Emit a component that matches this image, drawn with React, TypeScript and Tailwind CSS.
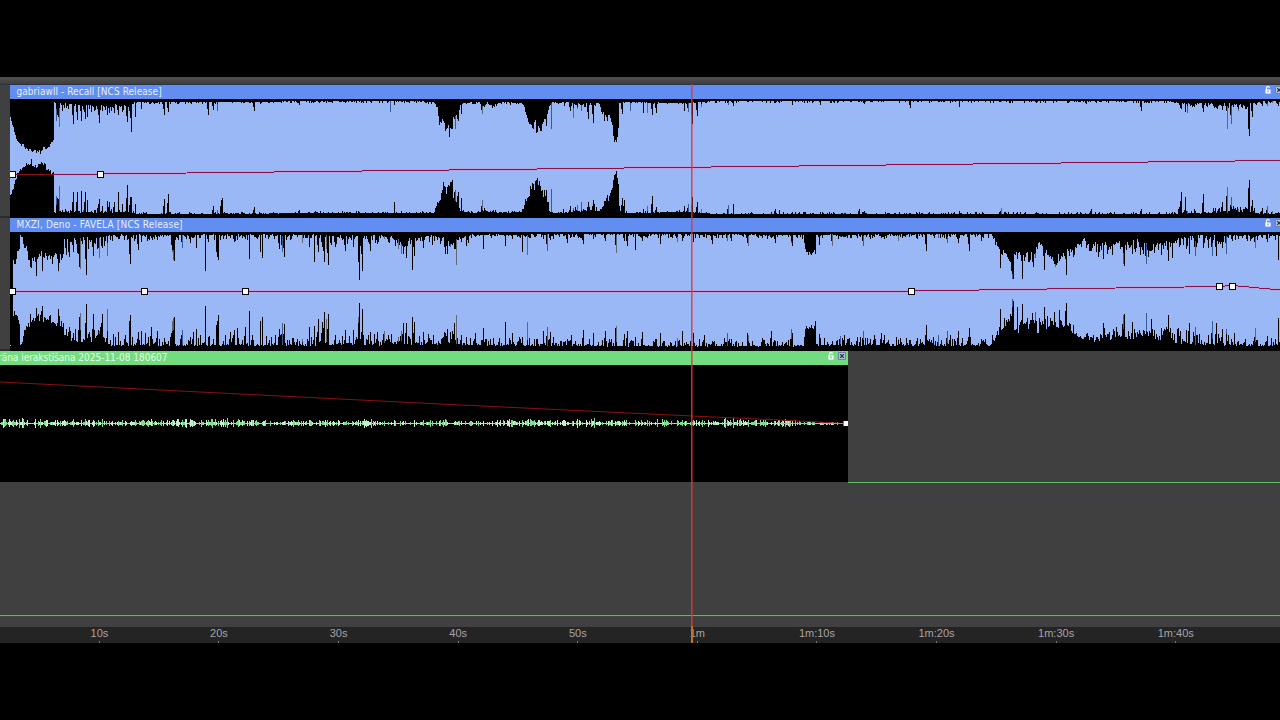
type Row = [number, number, number];

const WIDTH = 1280;
const WAVE_H = 113;

// [x, depth from the top edge, height from the bottom edge]
const RECALL_SHAPE: Row[] = [
  [10, 17, 19], [13, 25, 24], [15, 34, 34], [17, 40, 39], [21, 43, 44], [25, 46, 47], [31, 50, 51],
  [34, 49, 47], [37, 50, 47], [40, 50, 51], [44, 46, 49], [47, 47, 44], [50, 42, 42], [53, 38, 40],
  [54, 1, 1], [57, 4, 2], [72, 4, 2], [85, 5, 2], [98, 6, 2], [128, 5, 2], [137, 1, 0], [420, 0, 1],
  [434, 1, 1], [437, 8, 10], [439, 21, 12], [442, 18, 22], [444, 27, 28], [447, 30, 27], [449, 31, 30],
  [452, 31, 30], [453, 20, 18], [456, 12, 10], [461, 2, 2], [478, 1, 1], [482, 5, 4], [496, 3, 2],
  [502, 1, 1], [521, 2, 2], [524, 6, 6], [526, 18, 14], [528, 20, 18], [531, 26, 29], [535, 25, 30],
  [538, 31, 32], [541, 30, 30], [543, 20, 22], [546, 17, 15], [549, 5, 3], [552, 1, 1], [568, 2, 2],
  [580, 4, 4], [600, 3, 3], [602, 12, 6], [605, 15, 10], [607, 16, 15], [610, 19, 20], [612, 26, 26],
  [614, 38, 38], [616, 40, 42], [618, 28, 30], [619, 2, 6], [622, 1, 1], [640, 1, 1], [680, 2, 2],
  [702, 1, 1], [712, 0, 0], [1170, 0, 0], [1180, 3, 1], [1200, 3, 1], [1225, 4, 3], [1240, 4, 3],
  [1254, 3, 2], [1260, 0, 0], [1280, 0, 0],
];

const RECALL_SPIKES: Row[] = [
  [56, 20, 18], [57, 14, 16], [59, 26, 28], [62, 10, 4], [64, 7, 2], [68, 8, 3], [73, 23, 22], [77, 19, 22],
  [81, 20, 23], [83, 9, 4], [85, 18, 22], [87, 16, 14], [91, 8, 3], [95, 9, 4], [98, 14, 10], [99, 22, 15],
  [102, 10, 8], [107, 14, 13], [109, 12, 12], [111, 10, 5], [114, 12, 12], [118, 14, 22], [122, 9, 10],
  [126, 15, 12], [127, 21, 29], [130, 17, 17], [131, 31, 17],
  [135, 16, 10], [141, 8, 1], [164, 14, 15], [168, 11, 20], [208, 14, 0], [213, 9, 8], [217, 10, 4],
  [221, 0, 14], [222, 0, 16], [254, 10, 7], [299, 4, 4], [390, 11, 0], [394, 4, 12], [455, 28, 24],
  [457, 18, 18], [458, 20, 22], [461, 13, 16], [481, 9, 8], [482, 13, 14], [551, 28, 25], [546, 25, 24],
  [570, 10, 8], [573, 17, 6], [577, 8, 9], [581, 10, 12], [588, 18, 12], [593, 22, 14], [622, 13, 16],
  [624, 2, 14], [630, 10, 0], [643, 12, 5], [647, 12, 8], [652, 14, 18], [656, 12, 7], [684, 10, 8],
  [688, 11, 10], [692, 23, 17], [697, 15, 12], [701, 6, 5], [728, 4, 9], [733, 5, 10], [775, 2, 5],
  [779, 2, 4], [792, 4, 0], [820, 4, 2], [859, 1, 5], [864, 3, 3], [910, 7, 1], [959, 6, 3],
  [1001, 1, 6], [1091, 0, 5], [1086, 3, 0], [1141, 10, 5], [1180, 7, 13], [1181, 8, 22], [1185, 11, 17],
  [1187, 12, 3], [1203, 11, 20], [1215, 6, 6], [1222, 9, 12], [1227, 28, 27], [1226, 10, 18],
  [1231, 23, 17], [1238, 10, 5], [1248, 28, 26], [1249, 35, 34], [1252, 16, 14], [1262, 5, 6],
  [1267, 5, 8], [1272, 2, 3], [1278, 5, 2],
];

const FAVELA_SHAPE: Row[] = [
  [10, 113, 0], [12, 113, 0], [13, 27, 32], [15, 30, 31], [17, 17, 29], [19, 16, 20], [20, 0, 0], [22, 3, 5],
  [24, 8, 14], [26, 14, 22], [28, 28, 24], [32, 27, 30], [36, 27, 32], [40, 20, 30], [44, 20, 28],
  [50, 24, 26], [54, 20, 22], [58, 26, 24], [62, 22, 22], [64, 4, 10], [67, 8, 14], [75, 8, 10],
  [82, 5, 8], [90, 6, 10], [100, 5, 8], [107, 2, 4], [120, 1, 2], [310, 1, 2], [340, 3, 4], [360, 3, 5],
  [380, 2, 3], [395, 5, 5], [403, 12, 6], [415, 6, 5], [430, 1, 3], [440, 5, 5], [446, 12, 10],
  [456, 6, 6], [470, 1, 2], [640, 0, 1], [803, 1, 1], [805, 16, 18], [808, 18, 20], [810, 21, 20],
  [813, 17, 20], [815, 20, 22], [816, 1, 2], [992, 0, 2], [995, 6, 8], [997, 12, 12], [999, 18, 18],
  [1001, 22, 18], [1003, 18, 22], [1008, 24, 28], [1011, 33, 32], [1013, 43, 44], [1014, 20, 14],
  [1018, 16, 18], [1022, 20, 20], [1026, 22, 24], [1030, 23, 26], [1034, 25, 30], [1037, 8, 20],
  [1040, 8, 20], [1044, 20, 18], [1048, 20, 22], [1053, 25, 24], [1056, 28, 22], [1060, 22, 24],
  [1066, 21, 28], [1072, 18, 20], [1078, 11, 12], [1084, 6, 10], [1090, 16, 10], [1096, 13, 9],
  [1104, 16, 14], [1110, 14, 12], [1115, 12, 14], [1120, 11, 11], [1126, 15, 16], [1130, 11, 11],
  [1138, 10, 11], [1144, 17, 18], [1150, 18, 16], [1156, 13, 12], [1162, 10, 10], [1170, 9, 7],
  [1180, 6, 7], [1190, 4, 5], [1210, 3, 4], [1220, 1, 3], [1250, 2, 2], [1270, 1, 1], [1280, 3, 3],
];

const FAVELA_SPIKES: Row[] = [
  [36, 42, 39], [42, 37, 41], [47, 26, 28], [52, 30, 18], [58, 37, 38], [66, 21, 18], [69, 23, 20],
  [73, 18, 14], [79, 33, 30], [80, 35, 34], [86, 41, 43], [90, 8, 10], [93, 22, 33], [99, 24, 16],
  [102, 14, 33], [107, 22, 38], [118, 5, 15], [129, 20, 26], [130, 30, 32], [138, 16, 15], [141, 8, 16],
  [145, 3, 14], [151, 4, 20], [157, 5, 16], [172, 18, 26], [173, 26, 29], [174, 27, 30], [182, 14, 17],
  [190, 9, 10], [193, 4, 15], [196, 14, 18], [205, 37, 41], [208, 8, 10], [216, 18, 22], [217, 23, 26],
  [218, 26, 32], [230, 4, 15], [234, 8, 17], [237, 6, 19], [245, 5, 20], [249, 25, 36], [260, 18, 26],
  [262, 24, 30], [279, 15, 18], [282, 18, 24], [284, 23, 23], [302, 9, 8], [309, 13, 20], [314, 28, 21],
  [318, 18, 28], [322, 13, 25], [324, 28, 35], [326, 15, 28], [328, 31, 33], [335, 13, 12], [345, 17, 17],
  [353, 13, 17], [358, 14, 30], [359, 46, 44], [361, 20, 15], [362, 37, 38], [368, 8, 12], [370, 17, 15],
  [377, 10, 15], [384, 5, 16], [388, 8, 12], [398, 15, 10], [401, 20, 16], [403, 20, 24], [406, 24, 24],
  [412, 36, 30], [414, 22, 25], [423, 14, 15], [445, 20, 14], [447, 20, 18], [450, 13, 10],
  [454, 15, 24], [456, 31, 32], [461, 8, 12], [475, 3, 14], [483, 15, 19], [505, 12, 25], [512, 5, 14],
  [519, 3, 10], [522, 18, 10], [527, 21, 25], [543, 5, 16], [547, 17, 20], [550, 6, 15], [553, 5, 10],
  [567, 9, 4], [571, 3, 12], [583, 10, 17], [593, 5, 14], [605, 7, 16], [615, 10, 19], [616, 19, 21],
  [624, 7, 13], [627, 12, 16], [635, 16, 10], [642, 7, 15], [660, 10, 14], [677, 8, 9], [682, 7, 16],
  [693, 8, 14], [704, 3, 12], [712, 10, 6], [727, 7, 14], [731, 7, 8], [747, 9, 14], [748, 12, 12],
  [762, 3, 9], [771, 4, 16], [775, 9, 4], [791, 9, 18], [792, 12, 14], [815, 20, 26], [819, 11, 13],
  [832, 12, 6], [840, 3, 11], [844, 3, 12], [857, 4, 10], [863, 12, 16], [870, 5, 8], [874, 3, 12],
  [881, 4, 14], [884, 5, 12], [898, 7, 8], [917, 5, 9], [926, 17, 22], [938, 4, 12], [947, 9, 16],
  [950, 3, 12], [958, 9, 16], [969, 17, 19], [981, 7, 8], [992, 2, 12], [1000, 34, 38], [1012, 45, 48],
  [1017, 25, 40], [1022, 45, 43], [1035, 24, 35], [1044, 36, 40], [1055, 33, 25], [1056, 31, 20],
  [1066, 41, 44], [1123, 30, 32], [1124, 32, 33], [1132, 18, 25], [1146, 30, 34], [1168, 27, 32],
  [1172, 24, 14], [1189, 20, 24], [1195, 22, 20], [1212, 22, 26], [1216, 22, 24], [1222, 14, 18],
  [1226, 20, 18], [1231, 5, 8], [1255, 14, 19], [1267, 8, 11], [1278, 26, 29],
];

// stretches where single columns stand well out of the body:
// [from, to, top, bottom, smallest share of the body that a column keeps]
const RECALL_ROUGH = [
  [54, 136, 7, 3, 0.35], [437, 462, 6, 7, 0.72], [478, 500, 4, 4, 0.3], [524, 550, 5, 7, 0.75],
  [562, 600, 5, 7, 0.35], [600, 613, 7, 7, 0.75], [1176, 1256, 6, 6, 0.35],
];
const FAVELA_ROUGH = [
  [22, 64, 8, 9, 0.78], [64, 110, 16, 18, 0.35], [110, 330, 6, 12, 0.3], [330, 470, 10, 12, 0.35],
  [470, 800, 4, 8, 0.35], [803, 816, 3, 3, 0.85], [816, 994, 4, 9, 0.35], [994, 1012, 6, 8, 0.8],
  [1014, 1080, 9, 13, 0.7], [1080, 1180, 11, 14, 0.5], [1180, 1236, 12, 14, 0.35], [1236, 1280, 5, 8, 0.35],
];

function seeded(seed: number) {
  let s = seed;
  return () => {
    s = (s * 16807) % 2147483647;
    return s / 2147483647;
  };
}

function sample(shape: Row[], x: number): [number, number] {
  for (let i = 1; i < shape.length; i++) {
    const a = shape[i - 1];
    const b = shape[i];
    if (x <= b[0]) {
      const t = (x - a[0]) / (b[0] - a[0]);
      return [a[1] + (b[1] - a[1]) * t, a[2] + (b[2] - a[2]) * t];
    }
  }
  return [0, 0];
}

function buildWave(shape: Row[], spikes: Row[], rough: number[][], noise: number, seed: number) {
  const rnd = seeded(seed);
  const peaks = new Map(spikes.map((s) => [s[0], s]));
  const paths = ['', '', ''];
  const column = (tone: number, x: number, t: number, b: number) => {
    if (t > 0) paths[tone] += `M${x} 0h1v${t}h-1z`;
    if (b > 0) paths[tone] += `M${x} ${WAVE_H}h1v${-b}h-1z`;
  };
  for (let x = 10; x < WIDTH; x++) {
    let [top, bottom] = sample(shape, x);
    const zone = rough.find((z) => x >= z[0] && x < z[1]);
    if (zone) {
      const keep = zone[4];
      top = top * (keep + rnd() * (1.08 - keep)) + Math.pow(rnd(), 3) * zone[2];
      bottom = bottom * (keep + rnd() * (1.08 - keep)) + Math.pow(rnd(), 3.2) * zone[3];
    } else {
      if (top > 4) top += (rnd() - 0.5) * 3;
      if (bottom > 4) bottom += (rnd() - 0.5) * 4;
      top += Math.pow(rnd(), 4) * noise;
      bottom += Math.pow(rnd(), 4) * noise;
    }
    const r = rnd();
    const peak = peaks.get(x);
    const next = peaks.get(x + 1);
    if (next && r > 0.4) {
      top = Math.max(top, next[1] * 0.6);
      bottom = Math.max(bottom, next[2] * 0.55);
    }
    if (peak) {
      const tone = r > 0.86 ? 1 : r > 0.76 ? 2 : 0;
      column(tone, x, Math.round(peak[1]), Math.round(peak[2]));
    }
    column(0, x, Math.min(WAVE_H, Math.round(top)), Math.round(bottom));
  }
  return paths;
}

function Wave({ paths }: { paths: string[] }) {
  return (
    <g shapeRendering="crispEdges">
      <rect x="10" y="0" width="1270" height={WAVE_H} fill="#9ab8f6" />
      <path d={paths[1]} fill="#355d9c" />
      <path d={paths[2]} fill="#5f6873" />
      <path d={paths[0]} fill="#000" />
    </g>
  );
}

function Handle({ x, y }: { x: number; y: number }) {
  return <rect x={x - 3} y={y - 3} width="6" height="6" fill="#fff" stroke="#000" strokeWidth="1" />;
}

function Volume({ points }: { points: string }) {
  return (
    <g fill="none" shapeRendering="crispEdges">
      <polyline points={points} stroke="#e58cc0" strokeOpacity="0.45" strokeWidth="3" />
      <polyline points={points} stroke="#8c0f4c" strokeWidth="1" />
    </g>
  );
}

function LockIcon() {
  return (
    <svg width="6" height="8" viewBox="0 0 6 8" className="shrink-0">
      <path d="M1.5 4V1.7Q1.5 .6 3 .6T4.5 1.8" fill="none" stroke="#fff" strokeWidth="1.1" />
      <path d="M.4 3.4h5.2v4.2H.4z" fill="#fff" />
      <path d="M2.5 4.6h1.1v1.6H2.5z" fill="#5b7fc4" />
    </svg>
  );
}

function CloseIcon() {
  return (
    <svg width="8" height="8" viewBox="0 0 8 8" className="shrink-0">
      <path d="M.5 .5h7v7h-7z" fill="#b4c4d8" stroke="#6c82a0" strokeWidth="1" />
      <path d="M2.2 2.2l3.6 3.6M5.8 2.2L2.2 5.8" stroke="#1d2a48" strokeWidth="1.2" />
    </svg>
  );
}

function BlueClip({ title, tracking, children }: { title: string; tracking: string; children: React.ReactNode }) {
  return (
    <div className="flex h-[133px] shrink-0 flex-col overflow-hidden">
      <div className="flex">
        <div className="w-[10px] shrink-0 bg-[#404040]" />
        <div className="flex h-[14px] w-[1270px] shrink-0 items-center justify-between bg-[#628df1] pl-[6.5px]">
          <span
            className={`whitespace-nowrap text-[10px] leading-[14px] text-[#e6f0ff] [font-family:'DejaVu_Sans_Condensed','DejaVu_Sans',sans-serif] [font-stretch:condensed] ${tracking}`}
          >
            {title}
          </span>
          <div className="-mr-[3px] flex h-[14px] items-start gap-1 pt-[1px]">
            <LockIcon />
            <CloseIcon />
          </div>
        </div>
      </div>
      <div className="flex h-[119px]">
        <div className="w-[10px] shrink-0 border-b-2 border-[#2c2c2c] bg-[#404040]" />
        <div className="h-full w-[1270px] shrink-0 bg-black pt-[2px]">
          <svg width="1270" height="113" viewBox="10 0 1270 113" className="block">
            {children}
          </svg>
        </div>
      </div>
    </div>
  );
}

const recall = buildWave(RECALL_SHAPE, RECALL_SPIKES, RECALL_ROUGH, 2.4, 71);
const favela = buildWave(FAVELA_SHAPE, FAVELA_SPIKES, FAVELA_ROUGH, 5, 905);

function buildVoice() {
  const rnd = seeded(4242);
  const out = ['', ''];
  for (let x = 0; x < 842; x++) {
    const fade = x > 795 ? 0.5 : 1;
    const swell = 1.2 + 0.4 * Math.sin(x / 37 + 1) * Math.sin(x / 16);
    const up = Math.min(5, Math.round(Math.pow(rnd(), 2) * 3.2 * swell * fade));
    const down = Math.min(4, Math.round(up * (0.5 + rnd() * 0.5)));
    out[rnd() > 0.5 ? 0 : 1] += `M${x} ${58 - up}h1v${up + down + 1}h-1z`;
  }
  return out;
}

const voice = buildVoice();

const TIMES = ['10s', '20s', '30s', '40s', '50s', '1m', '1m:10s', '1m:20s', '1m:30s', '1m:40s'];

export default function App() {
  return (
    <div className="relative flex h-[720px] w-[1280px] flex-col overflow-hidden bg-black py-[77px]">
      <div className="flex h-[566px] flex-col bg-[#404040]">
        <div className="h-[8px] shrink-0 border-b border-[#2a3245] bg-gradient-to-b from-[#505050] to-[#3e3e3e]" />

        <BlueClip title="gabriawll - Recall [NCS Release]" tracking="tracking-[0.06px]">
          <Wave paths={recall} />
          <Volume points="54,73.4 100,73 1280,59.5" />
          <path d="M15 73.5H54" stroke="#8d1018" />
          <Handle x={12.5} y={73.5} />
          <Handle x={100.5} y={73.5} />
        </BlueClip>

        <BlueClip title="MXZI, Deno - FAVELA [NCS Release]" tracking="tracking-[0.17px]">
          <Wave paths={favela} />
          <Volume points="12,57 911,57 1219,52.5 1232,51.5 1244,52.5 1280,56" />
          <Handle x={12.5} y={57.5} />
          <Handle x={144.5} y={57.5} />
          <Handle x={245.5} y={57.5} />
          <Handle x={911.5} y={57.5} />
          <Handle x={1219.5} y={52.5} />
          <Handle x={1232.5} y={52.5} />
        </BlueClip>

        <div className="flex h-[132px] shrink-0">
          <div className="mb-px w-[848px] shrink-0 overflow-hidden bg-black">
            <div className="flex h-[14px] items-center justify-between bg-[#72dc80] pr-[2px]">
              <span className="-ml-[2px] whitespace-nowrap text-[10px] leading-[14px] tracking-[-0.02px] text-[#e4ffe6] [font-family:'DejaVu_Sans_Condensed','DejaVu_Sans',sans-serif] [font-stretch:condensed]">
                rāna ierakstīšana 2025-11-08 180607
              </span>
              <div className="flex h-[14px] items-start gap-1 pt-[1px]">
                <LockIcon />
                <CloseIcon />
              </div>
            </div>
            <svg width="848" height="117" viewBox="0 0 848 117" className="block">
              <g shapeRendering="crispEdges">
                <path d="M0 58h842v1H0z" fill="#8fe39c" />
                <path d={voice[0]} fill="#7fdc90" />
                <path d={voice[1]} fill="#c4efcb" />
              </g>
              <path d="M0 17L430 38.5L692 51L800 56L843 58.5" fill="none" stroke="#8c1010" />
              <path d="M780 58.5H843" stroke="#e5a070" strokeOpacity="0.7" />
              <rect x="843.5" y="56" width="5" height="5" fill="#fff" />
            </svg>
          </div>
          <div className="flex-1 border-b border-[#62c26c]" />
        </div>

        <div className="h-[133px] shrink-0 border-b border-[#5fb868]" />
        <div className="h-[11px] shrink-0 border-t border-[#35503a]" />

        <div className="flex h-[16px] shrink-0 bg-[#242424] pl-[39.6px]">
          {TIMES.map((t) => (
            <div key={t} className="flex w-[119.6px] shrink-0 flex-col items-center justify-between">
              <span className="text-[11px] leading-[13px] text-[#a9a3a9] [font-family:'Liberation_Sans',Arial,sans-serif]">
                {t}
              </span>
              <i className="h-[2px] w-px bg-[#777777]" />
            </div>
          ))}
        </div>
      </div>

      <div className="absolute left-[691px] top-[84px] flex h-[559px] w-[2px] flex-col">
        <div className="flex flex-1">
          <div className="w-px bg-[#f03030]/85" />
          <div className="w-px bg-[#e83030]/50" />
        </div>
        <div className="h-[17px] bg-[#c8701c]" />
      </div>
    </div>
  );
}
